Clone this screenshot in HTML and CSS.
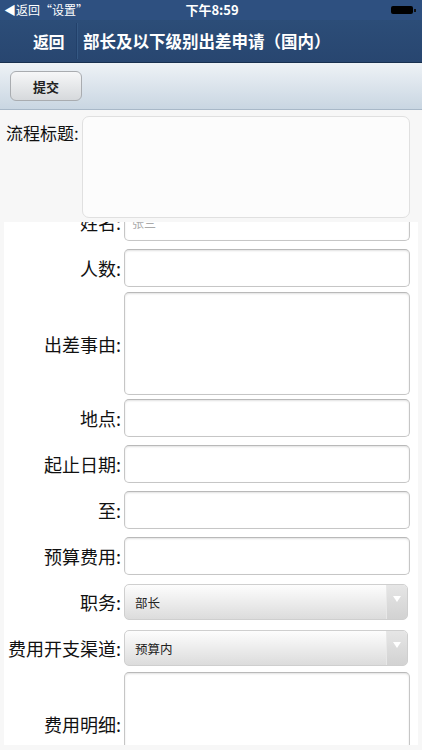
FILE: index.html
```html
<!DOCTYPE html>
<html lang="zh-CN">
<head>
<meta charset="utf-8">
<title>部长及以下级别出差申请（国内）</title>
<link rel="stylesheet" href="styles.css">
</head>
<body>
<div class="screen">
  <div class="status">
    <div class="status-left">◀返回“设置”</div>
    <div class="status-time">下午8:59</div>
    <div class="status-right">
      <span class="battery"></span><span class="battery-nub"></span>
    </div>
  </div>
  <div class="nav">
    <div class="nav-back">返回</div>
    <div class="nav-sep"></div>
    <div class="nav-title">部长及以下级别出差申请（国内）</div>
  </div>
  <div class="toolbar">
    <div class="btn">提交</div>
  </div>
  <div class="head-row">
    <div class="head-label">流程标题:</div>
    <div class="head-area"></div>
  </div>
  <div class="panel">
    <div class="panel-inner">
      <div class="row row-input">
        <div class="label">姓名:</div>
        <div class="field input"><span class="ph">张三</span></div>
      </div>
      <div class="row row-input">
        <div class="label">人数:</div>
        <div class="field input"></div>
      </div>
      <div class="row row-area">
        <div class="label">出差事由:</div>
        <div class="field area"></div>
      </div>
      <div class="row row-input">
        <div class="label">地点:</div>
        <div class="field input"></div>
      </div>
      <div class="row row-input">
        <div class="label">起止日期:</div>
        <div class="field input"></div>
      </div>
      <div class="row row-input">
        <div class="label">至:</div>
        <div class="field input"></div>
      </div>
      <div class="row row-input">
        <div class="label">预算费用:</div>
        <div class="field input"></div>
      </div>
      <div class="row row-select">
        <div class="label">职务:</div>
        <div class="field select"><span class="sel-text">部长</span><span class="sel-arrow"></span></div>
      </div>
      <div class="row row-select">
        <div class="label">费用开支渠道:</div>
        <div class="field select"><span class="sel-text">预算内</span><span class="sel-arrow"></span></div>
      </div>
      <div class="row row-area">
        <div class="label">费用明细:</div>
        <div class="field area"></div>
      </div>
    </div>
  </div>
</div>
</body>
</html>
```

FILE: styles.css
```css
* { box-sizing: border-box; }
html, body { margin: 0; padding: 0; }
body {
  font-family: "Noto Sans CJK SC", "Noto Sans", sans-serif;
  background: #f7f7f7;
  color: #111;
}
.screen {
  width: 422px;
  height: 750px;
  overflow: hidden;
  display: flex;
  flex-direction: column;
  background: #f7f7f7;
}
.status {
  height: 20px;
  background: #2e5080;
  color: #fff;
  display: flex;
  align-items: center;
  position: relative;
  padding: 0 6px 0 4px;
}
.status-left {
  font-size: 12px;
  line-height: 20px;
  flex: 1;
}
.status-time {
  font-size: 13px;
  font-weight: 600;
  line-height: 20px;
  width: 60px;
  text-align: center;
  position: absolute;
  left: 182px;
  top: 0;
}
.status-right {
  display: flex;
  align-items: center;
}
.battery {
  width: 22px;
  height: 8px;
  background: #000;
  border-radius: 2px;
  display: block;
}
.battery-nub {
  width: 2px;
  height: 3px;
  background: #111;
  display: block;
  margin-left: 1px;
}
.nav {
  height: 43px;
  background: linear-gradient(#2c4d78, #284670);
  border-bottom: 1px solid #18304f;
  display: flex;
  align-items: center;
  color: #fff;
}
.nav-back {
  font-size: 16px;
  font-weight: 600;
  width: 76px;
  padding-left: 33px;
  letter-spacing: -0.5px;
}
.nav-sep {
  width: 1px;
  height: 36px;
  background: #22406a;
  box-shadow: 1px 0 0 #355883;
}
.nav-title {
  font-size: 16.5px;
  font-weight: 600;
  padding-left: 6px;
  letter-spacing: 0;
}
.toolbar {
  height: 47px;
  background: linear-gradient(#eef2f6, #c9d6e2);
  border-bottom: 1px solid #a8b8c8;
  display: flex;
  align-items: center;
  padding-left: 10px;
}
.btn {
  width: 72px;
  height: 30px;
  border: 1px solid #a9acb0;
  border-radius: 6px;
  background: linear-gradient(#f6f7f8, #d6d9dc);
  font-size: 13px;
  font-weight: 600;
  display: flex;
  align-items: center;
  justify-content: center;
  color: #222;
}
.head-row {
  display: flex;
  padding: 6px 0 4px 0;
}
.head-label {
  font-size: 17px;
  width: 82px;
  padding-left: 6px;
  padding-top: 7px;
  line-height: 20px;
}
.head-area {
  width: 328px;
  height: 102px;
  border: 1px solid #e0e0e0;
  border-radius: 7px;
  background: #fcfcfc;
}
.panel {
  height: 523px;
  margin: 0 4px;
  background: #fff;
  overflow: hidden;
}
.panel-inner {
  margin-top: -23px;
  display: flex;
  flex-direction: column;
}
.row {
  display: flex;
  align-items: center;
}
.row-input { padding: 4px 0; }
.row-area { padding: 1px 0 0 0; }
.row-select { padding: 5px 0; }
.label {
  width: 117px;
  text-align: right;
  font-size: 18px;
  line-height: 22px;
  color: #111;
  flex-shrink: 0;
}
.field {
  margin-left: 3px;
  width: 286px;
  border-radius: 5px;
}
.input {
  height: 38px;
  border: 1px solid #c6c6c6;
  border-top-color: #b9b9b9;
  box-shadow: inset 0 1px 2px rgba(0,0,0,0.12);
  background: #fff;
  display: flex;
  align-items: center;
  padding-left: 7px;
}
.ph {
  font-size: 12px;
  color: #aaa;
}
.area {
  height: 103px;
  border: 1px solid #c6c6c6;
  border-top-color: #b9b9b9;
  box-shadow: inset 0 1px 2px rgba(0,0,0,0.12);
  background: #fff;
}
.select {
  height: 36px;
  width: 284px;
  border: 1px solid #cfcfcf;
  background: linear-gradient(#fdfdfd, #dcdcdc);
  display: flex;
  align-items: center;
  overflow: hidden;
}
.sel-text {
  font-size: 12.5px;
  color: #222;
  padding-left: 10px;
  flex: 1;
}
.sel-arrow {
  width: 21px;
  height: 100%;
  background: linear-gradient(#e6e6e6, #d2d2d2);
  border-left: 1px solid #e8e8e8;
  display: flex;
  align-items: center;
  justify-content: center;
}
.sel-arrow::after {
  content: "";
  width: 0;
  height: 0;
  border-left: 4px solid transparent;
  border-right: 4px solid transparent;
  border-top: 6px solid #fff;
  margin-top: -6px;
}
```
